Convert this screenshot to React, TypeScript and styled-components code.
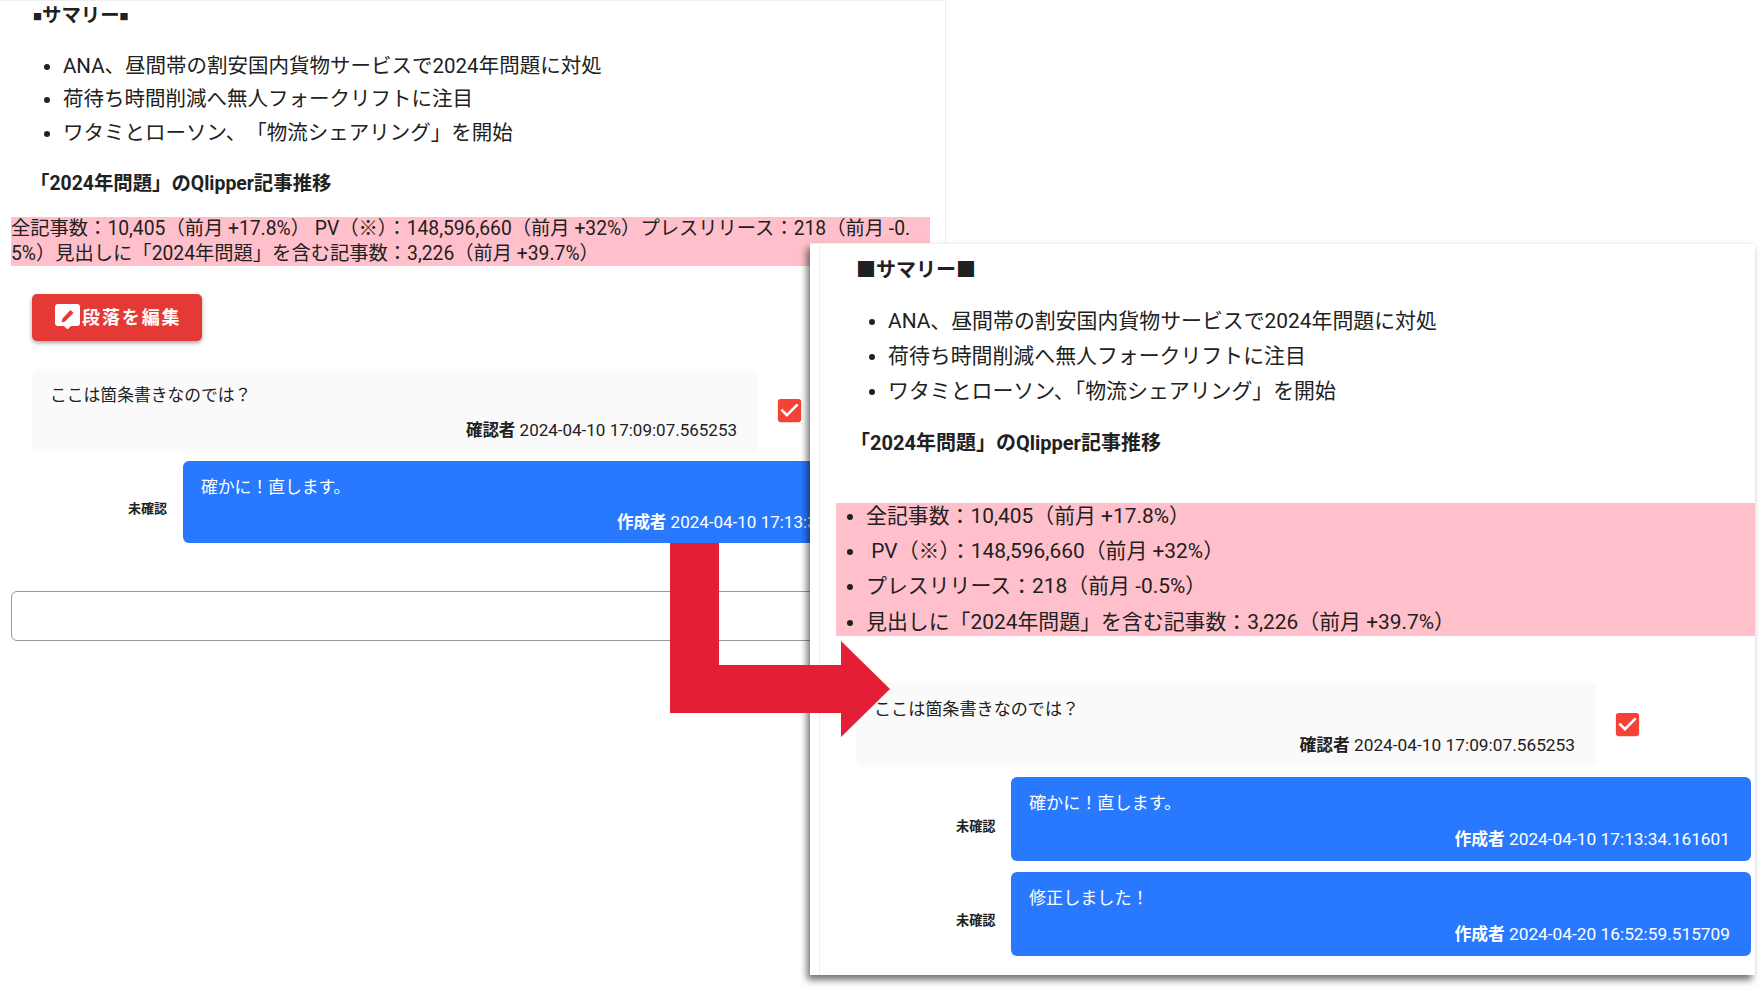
import React from "react";
import styled, { createGlobalStyle, ThemeProvider } from "styled-components";

type Metrics = {
  list: number; listLine: number; listPad: number; listTrim: string; heading: number; headAfter: number; cardW: number; cardH: number;
  bubbleGap: number; bubbleIndent: number; body: number; meta: number; label: number; labelW: number; labelTop: number;
  padX: number; padBottom: number;
};

const leftMetrics: Metrics = { list: 20.5, listLine: 33.7, listPad: 63, listTrim: "space-all", heading: 19.4, headAfter: 19.5, cardW: 726, cardH: 82, bubbleGap: 10, bubbleIndent: 151, body: 16.8, meta: 17, label: 13, labelW: 40, labelTop: 10.5, padX: 18, padBottom: 8 };
const rightMetrics: Metrics = { list: 20.9, listLine: 35.2, listPad: 67, listTrim: "normal", heading: 20, headAfter: 21, cardW: 740, cardH: 84, bubbleGap: 10.5, bubbleIndent: 155, body: 17.1, meta: 17.3, label: 13.2, labelW: 40, labelTop: 12, padX: 18, padBottom: 10 };

const Global = createGlobalStyle`
  html, body { margin: 0; padding: 0; background: #fff; }
  body { font-family: Roboto, "Noto Sans CJK JP", sans-serif; color: #212121; }
`;

const Canvas = styled.div`
  position: relative;
  width: 1760px;
  height: 987px;
  overflow: hidden;
  background: #fff;
`;

const LeftShot = styled.section`
  width: 946px;
  height: 900px;
  box-sizing: border-box;
  border-top: 1px solid #f0f0f0;
  border-right: 1px solid #eeeeee;
`;

const RightShot = styled.section`
  position: absolute;
  left: 810px;
  top: 243px;
  width: 945px;
  height: 732px;
  box-sizing: border-box;
  background: #fff;
  border-top: 1px solid #f2f2f2;
  box-shadow: -3px 5px 7px rgba(0, 0, 0, 0.55);
`;

const RightInner = styled.div`
  height: 100%;
  margin-left: 9px;
  padding: 13px 0 0 1px;
  box-sizing: border-box;
  border-left: 1px solid #eeeeee;
`;

const Heading = styled.h2<{ $left: number; $top?: number }>`
  margin: ${(p) => p.$top ?? 0}px 0 ${(p) => p.theme.headAfter}px ${(p) => p.$left}px;
  font-size: ${(p) => p.theme.heading}px;
  line-height: 26px;
  font-weight: 700;
`;

const SmallSquare = styled.span`
  font-size: 9px;
  vertical-align: 2px;
`;

const BulletList = styled.ul`
  margin: 0;
  padding-left: ${(p) => p.theme.listPad}px;
  font-size: ${(p) => p.theme.list}px;
  line-height: ${(p) => p.theme.listLine}px;
  list-style: disc;
  text-spacing-trim: ${(p) => p.theme.listTrim};
`;

const SubHeading = styled.h3<{ $left: number; $after: number }>`
  margin: 19px 0 ${(p) => p.$after}px ${(p) => p.$left}px;
  font-size: ${(p) => p.theme.heading}px;
  line-height: 28px;
  font-weight: 700;
`;

const PinkPara = styled.p`
  margin: 0 15px 28px 11px;
  background: #ffc0cb;
  font-size: 19.3px;
  line-height: 24.5px;
  white-space: nowrap;
`;

const PinkList = styled.ul`
  display: flow-root;
  height: 133px;
  box-sizing: border-box;
  margin: 0 0 47px 15px;
  padding: 0 0 0 30px;
  background: #ffc0cb;
  font-size: ${(p) => p.theme.list}px;
  line-height: 35.4px;
  list-style: disc;
  li:first-child { margin-top: -4px; }
`;

const EditButton = styled.button`
  display: flex;
  align-items: center;
  gap: 2px;
  width: 170px;
  height: 47px;
  margin: 0 0 28px 32px;
  padding: 0 0 3px 23px;
  box-sizing: border-box;
  border: 0;
  border-radius: 5px;
  background: #e53935;
  color: #fff;
  font: 700 18px Roboto, "Noto Sans CJK JP", sans-serif;
  letter-spacing: 1.9px;
  box-shadow: 0 2px 4px rgba(0, 0, 0, 0.35);
`;

const Thread = styled.div<{ $left: number }>`
  display: flex;
  flex-direction: column;
  gap: ${(p) => p.theme.bubbleGap}px;
  margin-left: ${(p) => p.$left}px;
`;

const Row = styled.div`
  display: flex;
  align-items: center;
`;

const Bubble = styled.div<{ $mine?: boolean }>`
  display: flex;
  flex-direction: column;
  justify-content: space-between;
  flex: none;
  width: ${(p) => p.theme.cardW}px;
  height: ${(p) => p.theme.cardH}px;
  box-sizing: border-box;
  padding: 14px 21px ${(p) => p.theme.padBottom}px ${(p) => p.theme.padX}px;
  border-radius: 6px;
  background: ${(p) => (p.$mine ? "#2979ff" : "#fafafa")};
  color: ${(p) => (p.$mine ? "#fff" : "#212121")};
`;

const BubbleText = styled.div`
  font-size: ${(p) => p.theme.body}px;
  line-height: 24px;
`;

const BubbleMeta = styled.div`
  text-align: right;
  font-size: ${(p) => p.theme.meta}px;
  line-height: 24px;
  white-space: nowrap;
  b { font-weight: 700; font-size: 0.97em; }
`;

const ReadLabel = styled.span`
  flex: none;
  width: ${(p) => p.theme.labelW}px;
  margin: ${(p) => p.theme.labelTop}px 15px 0 -55px;
  font-size: ${(p) => p.theme.label}px;
  font-weight: 700;
  white-space: nowrap;
`;

const BubbleRow = styled(Row)`
  margin-left: ${(p) => p.theme.bubbleIndent}px;
`;

const CheckMark = styled.svg`
  flex: none;
  width: 31px;
  height: 31px;
  margin-left: 16px;
  fill: #f44336;
`;

const Reply = styled.input`
  display: block;
  width: 1000px;
  height: 50px;
  margin: 47.5px 0 0 11px;
  box-sizing: border-box;
  border: 1px solid #999;
  border-radius: 6px;
  background: #fff;
`;

const Arrow = styled.svg`
  position: absolute;
  left: 0;
  top: 0;
  width: 1760px;
  height: 987px;
  pointer-events: none;
`;

const CHECK = "M19 3H5c-1.11 0-2 .9-2 2v14c0 1.1.89 2 2 2h14c1.11 0 2-.9 2-2V5c0-1.1-.89-2-2-2zm-9 14l-5-5 1.41-1.41L10 14.17l7.59-7.59L19 8l-9 9z";

const Check = () => (
  <CheckMark viewBox="0 0 24 24"><path d={CHECK} /></CheckMark>
);

const Review = ({ author, time }: { author: string; time: string }) => (
  <BubbleMeta><b>{author}</b> {time}</BubbleMeta>
);

const SummaryList = () => (
  <BulletList>
    <li>ANA、昼間帯の割安国内貨物サービスで2024年問題に対処</li>
    <li>荷待ち時間削減へ無人フォークリフトに注目</li>
    <li>ワタミとローソン、「物流シェアリング」を開始</li>
  </BulletList>
);

const Reviewer = () => (
  <Row>
    <Bubble>
      <BubbleText>ここは箇条書きなのでは？</BubbleText>
      <Review author="確認者" time="2024-04-10 17:09:07.565253" />
    </Bubble>
    <Check />
  </Row>
);

const Mine = ({ text, time }: { text: string; time: string }) => (
  <BubbleRow>
    <ReadLabel>未確認</ReadLabel>
    <Bubble $mine>
      <BubbleText>{text}</BubbleText>
      <Review author="作成者" time={time} />
    </Bubble>
  </BubbleRow>
);

export default function App() {
  return (
    <Canvas>
      <Global />
      <ThemeProvider theme={leftMetrics}>
        <LeftShot>
          <Heading $left={33} $top={2}><SmallSquare>■</SmallSquare>サマリー<SmallSquare>■</SmallSquare></Heading>
          <SummaryList />
          <SubHeading $left={30} $after={19.5}>「2024年問題」のQlipper記事推移</SubHeading>
          <PinkPara>全記事数：10,405（前月 +17.8%） PV（※）：148,596,660（前月 +32%）プレスリリース：218（前月 -0.<br />5%）見出しに「2024年問題」を含む記事数：3,226（前月 +39.7%）</PinkPara>
          <EditButton>
            <svg width="25" height="25" viewBox="0 0 25 25">
              <path d="M3 0h19a3 3 0 0 1 3 3v16a3 3 0 0 1-3 3h-6l-3.500 3.500L9 22H3a3 3 0 0 1-3-3V3a3 3 0 0 1 3-3z" fill="#fff" />
              <path d="M6.500 18.500l1-4L15.500 6l3 3-8.500 8.500z" fill="#e53935" />
            </svg>
            段落を編集
          </EditButton>
          <Thread $left={32}>
            <Reviewer />
            <Mine text="確かに！直します。" time="2024-04-10 17:13:34.161601" />
          </Thread>
          <Reply readOnly />
        </LeftShot>
      </ThemeProvider>
      <ThemeProvider theme={rightMetrics}>
        <RightShot>
          <RightInner>
            <Heading $left={35}>■サマリー■</Heading>
            <SummaryList />
            <SubHeading $left={29} $after={46}>「2024年問題」のQlipper記事推移</SubHeading>
            <PinkList>
              <li>全記事数：10,405（前月 +17.8%）</li>
              <li>&nbsp;PV（※）：148,596,660（前月 +32%）</li>
              <li>プレスリリース：218（前月 -0.5%）</li>
              <li>見出しに「2024年問題」を含む記事数：3,226（前月 +39.7%）</li>
            </PinkList>
            <Thread $left={35}>
              <Reviewer />
              <Mine text="確かに！直します。" time="2024-04-10 17:13:34.161601" />
              <Mine text="修正しました！" time="2024-04-20 16:52:59.515709" />
            </Thread>
          </RightInner>
        </RightShot>
      </ThemeProvider>
      <Arrow viewBox="0 0 1760 987">
        <path d="M670 543H719V665H841V641L890 689L841 737V713H670z" fill="#e31e35" />
      </Arrow>
    </Canvas>
  );
}
